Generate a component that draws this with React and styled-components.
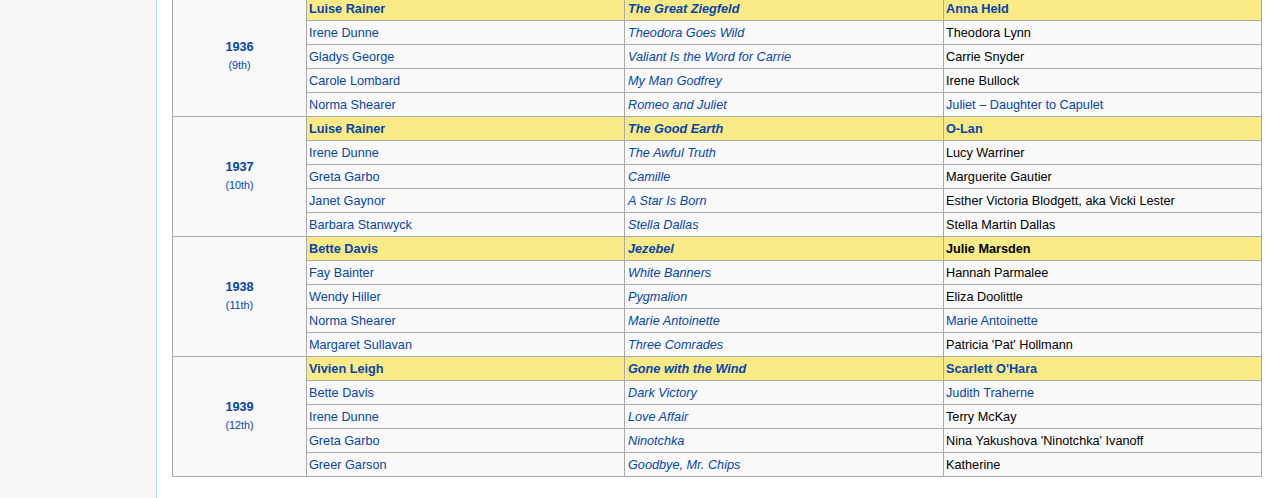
import React from 'react';
import styled, { createGlobalStyle } from 'styled-components';

const GlobalStyle = createGlobalStyle`
  html, body {
    margin: 0;
    padding: 0;
    background: #fff;
    overflow: hidden;
  }
  body {
    font-family: "Liberation Sans", Arial, sans-serif;
  }
`;

const Page = styled.div`
  display: flex;
  width: 1265px;
  height: 498px;
  overflow: hidden;
`;

const Sidebar = styled.div`
  width: 156px;
  flex-shrink: 0;
  background-color: #f6f6f6;
  border-right: 1px solid #a7d7f9;
`;

const Content = styled.div`
  flex: 1;
  padding-left: 15px;
  background-color: #fff;
`;

const Table = styled.table`
  width: 1090px;
  margin-top: -4px;
  border-collapse: collapse;
  table-layout: fixed;
  font-size: 12.7px;
  color: #000;
  background-color: #f9f9f9;
  border: 1px solid #aaa;
`;

const Row = styled.tr`
  height: 24px;
  background-color: ${p => (p.$winner ? '#faeb86' : '#f9f9f9')};
  font-weight: ${p => (p.$winner ? 'bold' : 'normal')};
`;

const Cell = styled.td`
  padding: 1px 2px 0 ${p => (p.$italic ? 3 : 2)}px;
  height: 22px;
  line-height: 15px;
  border: 1px solid #aaa;
  white-space: nowrap;
  overflow: hidden;
  font-style: ${p => (p.$italic ? 'italic' : 'normal')};
`;

const YearCell = styled.td`
  border: 1px solid #aaa;
  background-color: #f9f9f9;
  text-align: center;
  vertical-align: middle;
  padding: 0;
`;

const Year = styled.div`
  color: #0645ad;
  font-weight: bold;
  font-size: 12.7px;
  line-height: 16px;
`;

const Ceremony = styled.div`
  color: #0645ad;
  font-weight: normal;
  font-size: 10.8px;
  line-height: 20px;
`;

const Link = styled.span`
  color: #0645ad;
`;

const ceremonies = [
  {
    year: '1936',
    nth: '9th',
    rows: [
      ['Luise Rainer', 'The Great Ziegfeld', 'Anna Held', true],
      ['Irene Dunne', 'Theodora Goes Wild', 'Theodora Lynn', false],
      ['Gladys George', 'Valiant Is the Word for Carrie', 'Carrie Snyder', false],
      ['Carole Lombard', 'My Man Godfrey', 'Irene Bullock', false],
      ['Norma Shearer', 'Romeo and Juliet', 'Juliet – Daughter to Capulet', true],
    ],
  },
  {
    year: '1937',
    nth: '10th',
    rows: [
      ['Luise Rainer', 'The Good Earth', 'O-Lan', true],
      ['Irene Dunne', 'The Awful Truth', 'Lucy Warriner', false],
      ['Greta Garbo', 'Camille', 'Marguerite Gautier', false],
      ['Janet Gaynor', 'A Star Is Born', 'Esther Victoria Blodgett, aka Vicki Lester', false],
      ['Barbara Stanwyck', 'Stella Dallas', 'Stella Martin Dallas', false],
    ],
  },
  {
    year: '1938',
    nth: '11th',
    rows: [
      ['Bette Davis', 'Jezebel', 'Julie Marsden', false],
      ['Fay Bainter', 'White Banners', 'Hannah Parmalee', false],
      ['Wendy Hiller', 'Pygmalion', 'Eliza Doolittle', false],
      ['Norma Shearer', 'Marie Antoinette', 'Marie Antoinette', true],
      ['Margaret Sullavan', 'Three Comrades', 'Patricia \'Pat\' Hollmann', false],
    ],
  },
  {
    year: '1939',
    nth: '12th',
    rows: [
      ['Vivien Leigh', 'Gone with the Wind', 'Scarlett O\'Hara', true],
      ['Bette Davis', 'Dark Victory', 'Judith Traherne', true],
      ['Irene Dunne', 'Love Affair', 'Terry McKay', false],
      ['Greta Garbo', 'Ninotchka', 'Nina Yakushova \'Ninotchka\' Ivanoff', false],
      ['Greer Garson', 'Goodbye, Mr. Chips', 'Katherine', false],
    ],
  },
];

function App() {
  return (
    <Page>
      <GlobalStyle />
      <Sidebar />
      <Content>
        <Table>
          <colgroup>
            <col style={{ width: 134 }} />
            <col style={{ width: 318 }} />
            <col style={{ width: 319 }} />
            <col />
          </colgroup>
          <tbody>
            {ceremonies.map(c =>
              c.rows.map(([actor, film, role, roleLink], i) => (
                <Row key={c.year + i} $winner={i === 0}>
                  {i === 0 && (
                    <YearCell rowSpan={5}>
                      <Year>{c.year}</Year>
                      <Ceremony>({c.nth})</Ceremony>
                    </YearCell>
                  )}
                  <Cell><Link>{actor}</Link></Cell>
                  <Cell $italic><Link>{film}</Link></Cell>
                  <Cell>{roleLink ? <Link>{role}</Link> : role}</Cell>
                </Row>
              ))
            )}
          </tbody>
        </Table>
      </Content>
    </Page>
  );
}

export default App;
